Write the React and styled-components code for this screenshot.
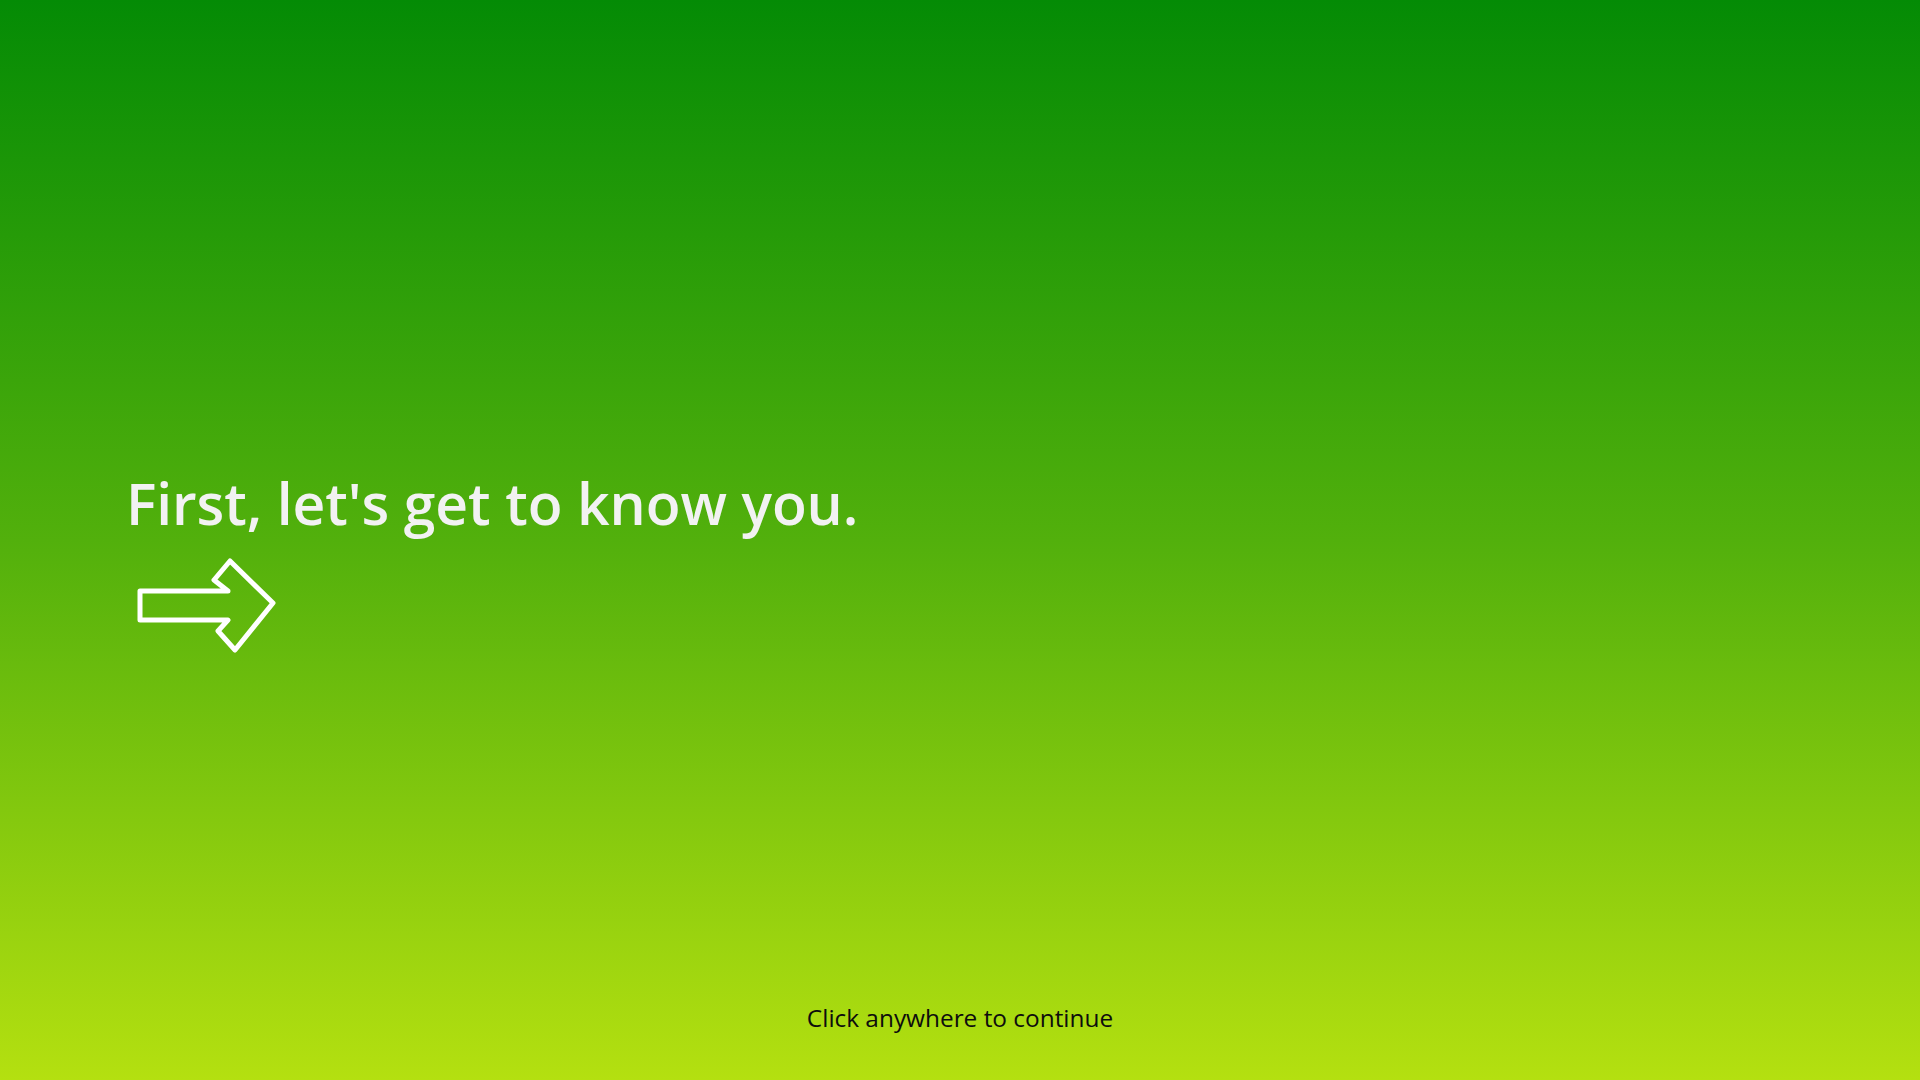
import React from "react";
import styled, { createGlobalStyle } from "styled-components";

const GlobalStyle = createGlobalStyle`
  html, body {
    margin: 0;
    padding: 0;
    height: 100%;
  }

  body {
    font-family: "Open Sans", "Noto Sans", sans-serif;
  }

  #root {
    height: 100%;
  }
`;

const Screen = styled.div`
  display: flex;
  flex-direction: column;
  box-sizing: border-box;
  width: 100vw;
  height: 100vh;
  background: linear-gradient(
    to bottom,
    #048b05 0%,
    #52b00c 50%,
    #b4e010 100%
  );
  cursor: pointer;
`;

const Intro = styled.div`
  flex: 1;
  display: flex;
  flex-direction: column;
  align-items: flex-start;
  padding-top: 469px;
  padding-left: 126px;
`;

const Title = styled.h1`
  margin: 0;
  font-family: "Open Sans", "Noto Sans", sans-serif;
  font-size: 57px;
  font-weight: 600;
  line-height: 1.2;
  letter-spacing: -0.1px;
  color: #f2f2f2;
`;

const ArrowIcon = styled.svg`
  display: block;
  width: 150px;
  height: 100px;
  margin-top: 18px;
  margin-left: 4px;
`;

const Footer = styled.div`
  display: flex;
  justify-content: center;
  padding-bottom: 48px;
`;

const Hint = styled.p`
  margin: 0;
  font-family: "Open Sans", "Noto Sans", sans-serif;
  font-size: 24.4px;
  font-weight: 500;
  line-height: 1.2;
  color: #0d0d0d;
`;

function App() {
  return (
    <>
      <GlobalStyle />
      <Screen>
        <Intro>
          <Title>First, let's get to know you.</Title>
          <ArrowIcon viewBox="0 0 150 100">
            <polygon
              points="10,36 98,36 84,25 100,6 143,48 105,95 88,76 98,65 10,65"
              fill="none"
              stroke="#ffffff"
              strokeWidth="5"
              strokeLinejoin="round"
            />
          </ArrowIcon>
        </Intro>
        <Footer>
          <Hint>Click anywhere to continue</Hint>
        </Footer>
      </Screen>
    </>
  );
}

export default App;
